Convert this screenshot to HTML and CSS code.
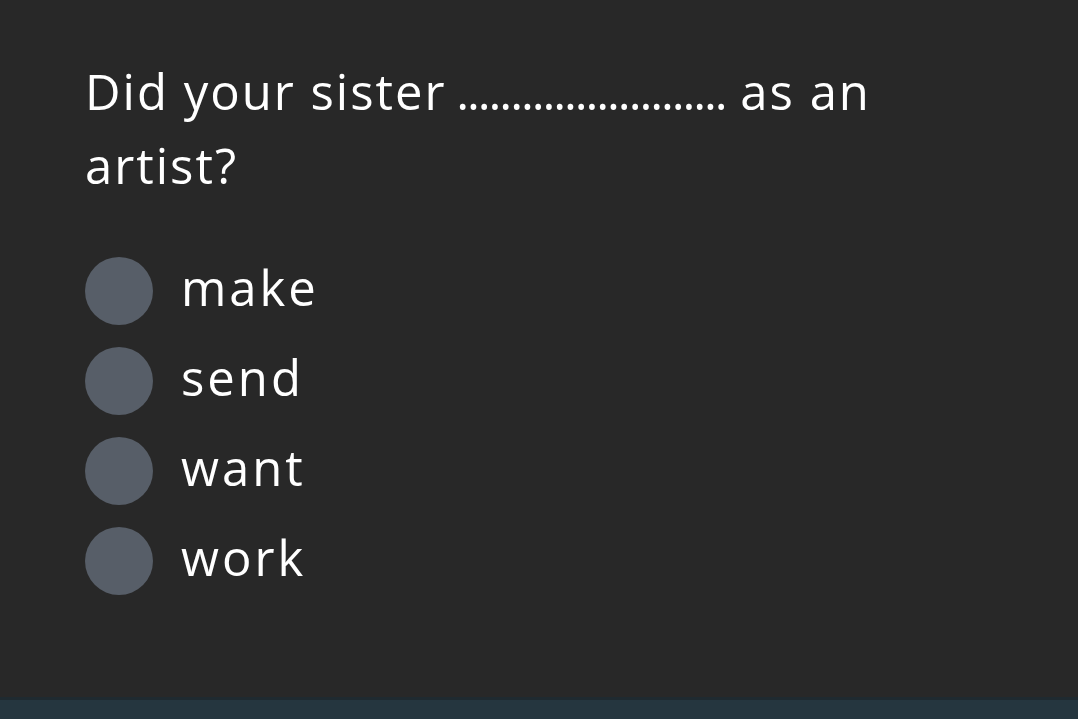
FILE: index.html
```html
<!DOCTYPE html>
<html lang="en">
<head>
<meta charset="utf-8">
<title>Quiz</title>
<link rel="stylesheet" href="styles.css">
</head>
<body>
<main class="quiz">
  <h1 class="question">Did your sister <span class="blank">.........................</span> as an artist?</h1>
  <ul class="options">
    <li class="option"><span class="radio"></span><span class="label">make</span></li>
    <li class="option"><span class="radio"></span><span class="label">send</span></li>
    <li class="option"><span class="radio"></span><span class="label">want</span></li>
    <li class="option"><span class="radio"></span><span class="label">work</span></li>
  </ul>
</main>
<footer class="bottom-bar"></footer>
</body>
</html>
```
FILE: styles.css
```css
html, body {
  margin: 0;
  padding: 0;
  height: 100%;
}
body {
  background: #282828;
  color: #ffffff;
  font-family: "Open Sans", "DejaVu Sans", sans-serif;
  display: flex;
  flex-direction: column;
  overflow: hidden;
}
.quiz {
  flex: 1;
  padding: 54px 100px 0 85px;
}
.question {
  margin: 0;
  font-weight: 400;
  font-size: 49px;
  line-height: 74px;
  letter-spacing: 2px;
  max-width: 880px;
}
.blank {
  letter-spacing: -2.1px;
  margin-left: -5px;
}
.options {
  list-style: none;
  margin: 55px 0 0 0;
  padding: 0;
  display: flex;
  flex-direction: column;
  gap: 22px;
}
.option {
  display: flex;
  align-items: center;
  gap: 28px;
  height: 68px;
}
.radio {
  width: 68px;
  height: 68px;
  border-radius: 50%;
  background: #575e68;
  flex: none;
}
.label {
  font-size: 49px;
  line-height: 60px;
  letter-spacing: 3px;
  padding-bottom: 8px;
}
.bottom-bar {
  height: 19px;
  background: #25363f;
  border-top: 3px solid #1f2a30;
  flex: none;
}
```
